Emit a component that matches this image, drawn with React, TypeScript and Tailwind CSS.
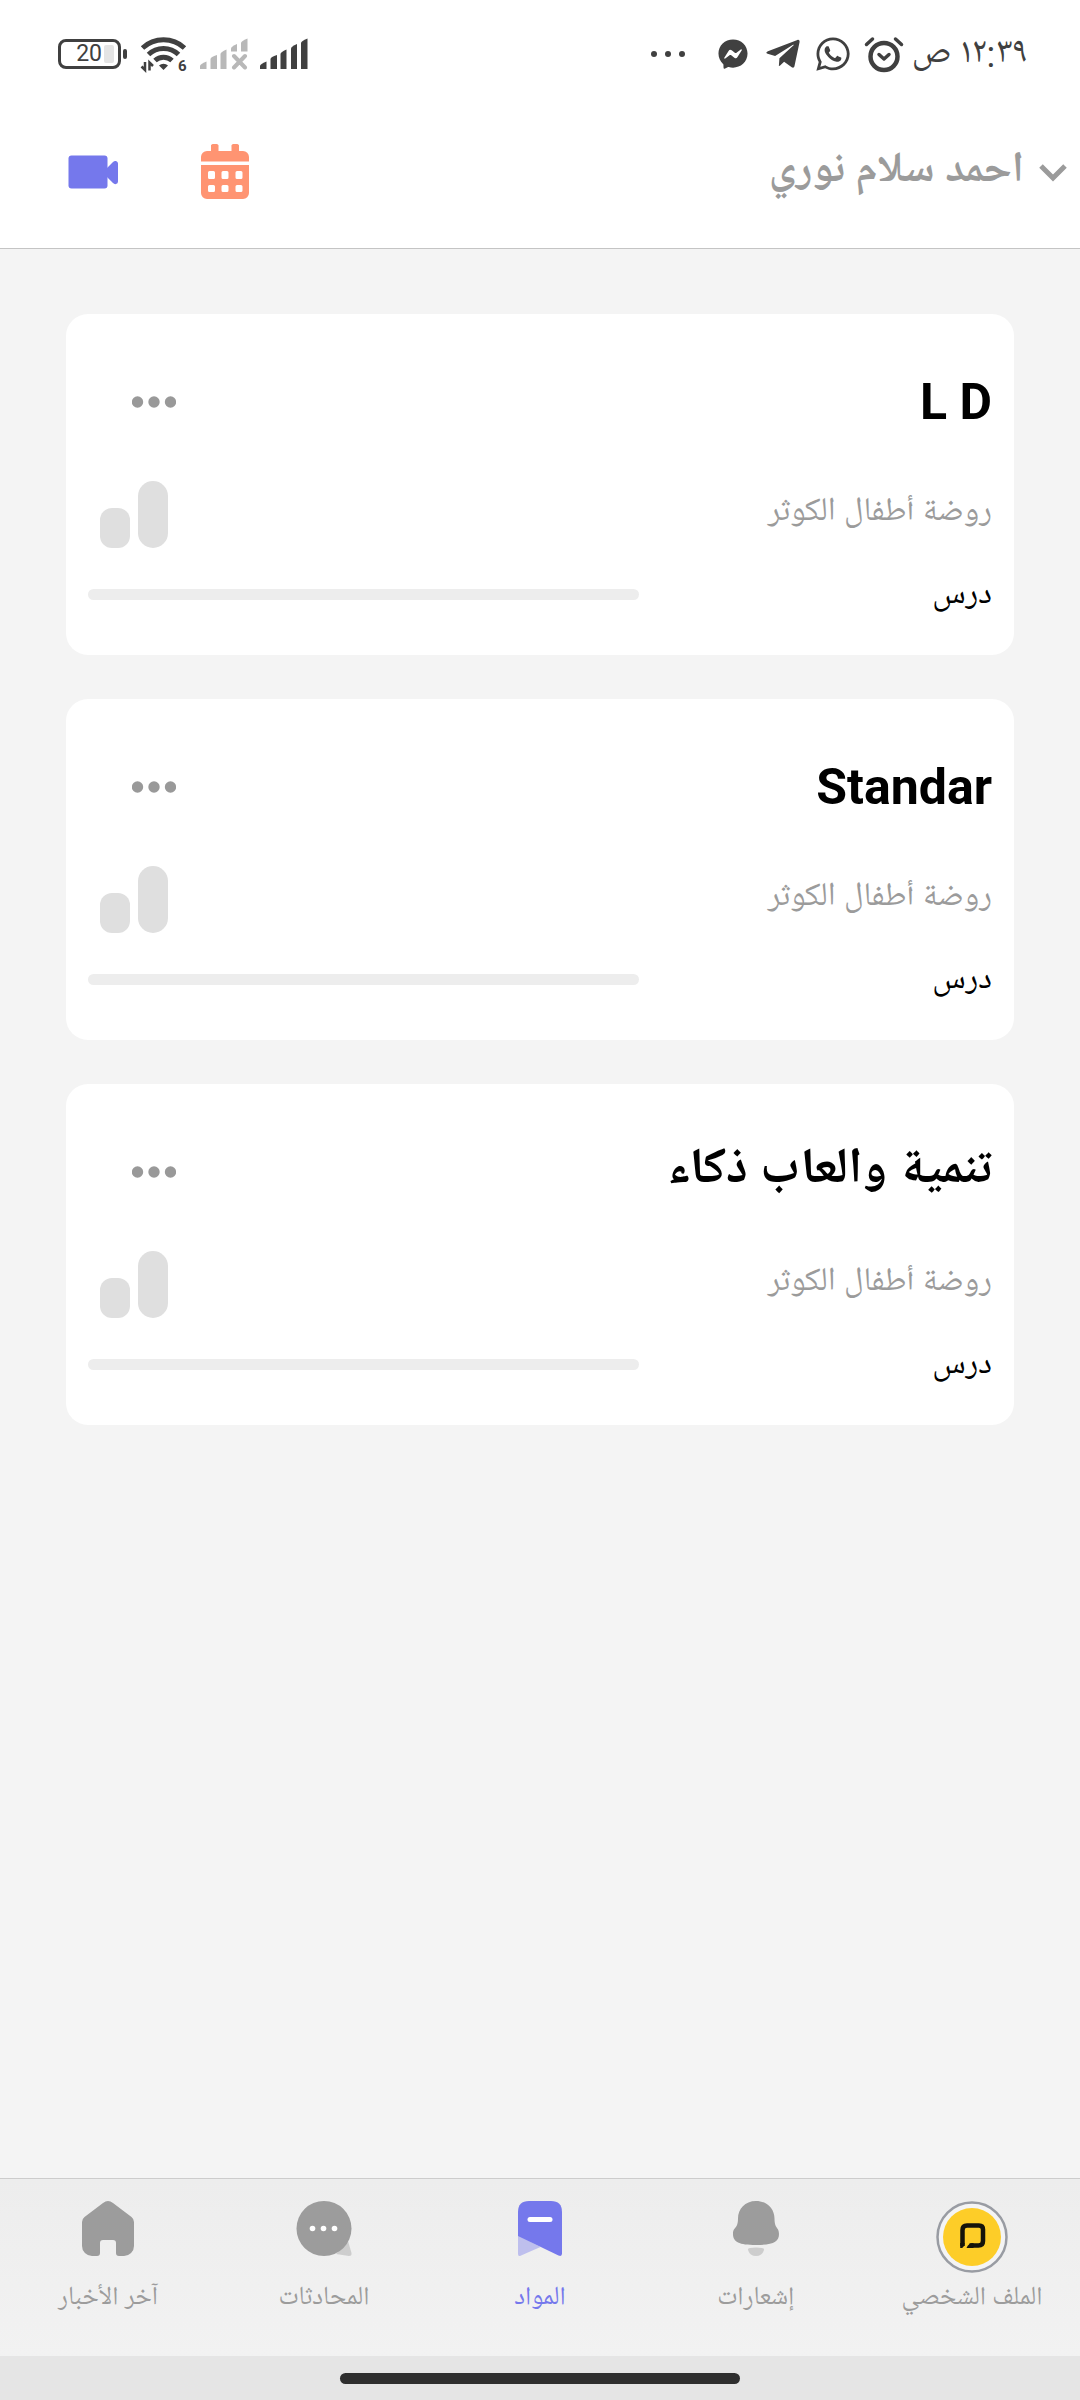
import React from 'react';
import { FaFacebookMessenger, FaTelegramPlane, FaWhatsapp } from 'react-icons/fa';

interface Subject {
  title: string;
  school: string;
  lesson: string;
}

const subjects: Subject[] = [
  { title: 'L D', school: 'روضة أطفال الكوثر', lesson: 'درس' },
  { title: 'Standar', school: 'روضة أطفال الكوثر', lesson: 'درس' },
  { title: 'تنمية والعاب ذكاء', school: 'روضة أطفال الكوثر', lesson: 'درس' },
];

function AlarmIcon() {
  return (
    <svg width="40" height="37" viewBox="0 0 40 37" fill="none" stroke="currentColor" strokeLinecap="round">
      <circle cx="20" cy="20.500" r="13.500" strokeWidth="4.500" />
      <path d="M15 18.500l5 4.500 5-4.500" strokeWidth="3.500" strokeLinejoin="round" />
      <path d="M2.500 8.500l6-5.500M37.500 8.500l-6-5.500" strokeWidth="3.500" />
    </svg>
  );
}

function Battery() {
  return (
    <div className="flex items-center gap-0.5">
      <div className="flex h-[30px] w-[63px] items-center justify-end rounded-[8px] border-3 border-[#404040] pr-1">
        <span className="text-[23px] leading-6">20</span>
        <span className="ml-0.5 h-[18px] w-2.5 rounded-xs bg-[#e4e4e4]" />
      </div>
      <div className="h-2.5 w-1 rounded-xs bg-[#404040]" />
    </div>
  );
}

function WifiIcon() {
  return (
    <svg width="50" height="44" viewBox="0 -4 50 44" fill="none" stroke="currentColor" strokeWidth="5">
      <path d="M2.500 12a31 31 0 0 1 42 0" />
      <path d="M8.500 18.500a21.500 21.500 0 0 1 30 0" />
      <path d="M15 24.500a12.500 12.500 0 0 1 17 0" />
      <path d="M23.500 34l-4.500-4.500a6.500 6.500 0 0 1 9 0z" fill="currentColor" stroke="none" />
      <path d="M5 26v8l-3.500-3.500M9.500 34.500v-8l3.500 3.500" strokeWidth="2.500" />
      <text x="38" y="34.500" textAnchor="start" direction="ltr" fontSize="15" fontWeight="700" fill="currentColor" stroke="none">6</text>
    </svg>
  );
}

function SignalIcon() {
  return (
    <svg width="48" height="32" viewBox="0 0 48 32" fill="currentColor">
      <path d="M0 31v-3q0-2 6.500-4.500v7.500z" />
      <path d="M10.500 31V21q0-2 6.500-4v14z" />
      <path d="M20.500 31V16q0-2 6-4.500v19.500z" />
      <path d="M31 31V10.500q0-2 6-4.500v25z" />
      <path d="M41 31V5q0-2 6.500-4.500v30.500z" />
    </svg>
  );
}

function NoSignalIcon() {
  return (
    <svg width="48" height="32" viewBox="0 0 48 32" fill="currentColor">
      <path d="M0 31v-3q0-2 6.500-4.500v7.500z" />
      <path d="M10.500 31V21q0-2 6.500-4v14z" />
      <path d="M20.500 31V16q0-2 6-4.500v19.500z" />
      <path d="M31 13.500V10.500q0-2 6-4.500v7.500z" />
      <path d="M41 13.500V5q0-2 6.500-4.500v13z" />
      <path d="M34 18l11 11.500M45 18L34 29.500" stroke="currentColor" strokeWidth="4" strokeLinecap="round" />
    </svg>
  );
}

function StatusBar() {
  return (
    <div className="flex h-24 items-center justify-between pt-3 pr-[52px] pl-[58px] text-[#404040]">
      <div className="flex items-center">
        <span className="pt-0.5 text-[36px] leading-10">١٢:٣٩ ص</span>
        <span className="mr-2"><AlarmIcon /></span>
        <FaWhatsapp className="mr-3 size-[38px]" />
        <FaTelegramPlane className="mr-3 size-[38px]" />
        <FaFacebookMessenger className="mr-4 size-[30px]" />
        <svg width="36" height="8" viewBox="0 0 36 8" fill="currentColor" className="mr-8">
          <circle cx="4" cy="4" r="3" />
          <circle cx="18" cy="4" r="3" />
          <circle cx="32" cy="4" r="3" />
        </svg>
      </div>
      <div dir="ltr" className="flex items-center">
        <Battery />
        <span className="ml-[13px]"><WifiIcon /></span>
        <span className="ml-2.5 text-[#b8b8b8]"><NoSignalIcon /></span>
        <span className="ml-3"><SignalIcon /></span>
      </div>
    </div>
  );
}

function Header() {
  return (
    <header className="flex h-[153px] items-center justify-between border-b border-[#c4c4c4] pr-3 pl-[68px]">
      <button type="button" className="flex items-center gap-3.5 text-[#9b9b9b]">
        <svg width="30" height="20" viewBox="0 0 30 20" fill="none" stroke="currentColor" strokeWidth="5">
          <path d="M3 4l12 12 12-12" />
        </svg>
        <span className="text-[43px] leading-[60px] font-bold">احمد سلام نوري</span>
      </button>
      <div className="flex items-center gap-[82px]">
        <button type="button" aria-label="التقويم">
          <svg width="50" height="56" viewBox="0 0 50 56" fill="#ff9472">
            <path d="M1 17.500V13a6 6 0 0 1 6-6h4V2.500a2 2 0 0 1 2-2.500h3.500a2 2 0 0 1 2 2.500V7h13V2.500a2 2 0 0 1 2-2.500H37a2 2 0 0 1 2 2.500V7h4a6 6 0 0 1 6 6v4.500z" />
            <path
              fillRule="evenodd"
              d="M1 21h48v28a6 6 0 0 1-6 6H7a6 6 0 0 1-6-6zM9.500 27a1.500 1.500 0 0 0-1.500 1.500v5a1.500 1.500 0 0 0 1.500 1.500h4a1.500 1.500 0 0 0 1.500-1.500v-5a1.500 1.500 0 0 0-1.500-1.500zM23 27a1.500 1.500 0 0 0-1.500 1.500v5a1.500 1.500 0 0 0 1.500 1.500h4a1.500 1.500 0 0 0 1.500-1.500v-5a1.500 1.500 0 0 0-1.500-1.500zM37 27a1.500 1.500 0 0 0-1.500 1.500v5a1.500 1.500 0 0 0 1.500 1.500h4a1.500 1.500 0 0 0 1.500-1.500v-5a1.500 1.500 0 0 0-1.500-1.500zM9.500 41a1.500 1.500 0 0 0-1.500 1.500v4a1.500 1.500 0 0 0 1.500 1.500h4a1.500 1.500 0 0 0 1.500-1.500v-4a1.500 1.500 0 0 0-1.500-1.500zM23 41a1.500 1.500 0 0 0-1.500 1.500v4a1.500 1.500 0 0 0 1.500 1.500h4a1.500 1.500 0 0 0 1.500-1.500v-4a1.500 1.500 0 0 0-1.500-1.500zM37 41a1.500 1.500 0 0 0-1.500 1.500v4a1.500 1.500 0 0 0 1.500 1.500h4a1.500 1.500 0 0 0 1.500-1.500v-4a1.500 1.500 0 0 0-1.500-1.500z"
            />
          </svg>
        </button>
        <button type="button" aria-label="مكالمة فيديو">
          <svg width="50" height="34" viewBox="0 0 50 34" fill="#7578ec">
            <rect x="0.500" y="0.500" width="39" height="33" rx="3" />
            <path d="M39 13l6-6q1.500-1.500 3-1 2 .5 2 2.500v18q0 2-2 2.500-1.500.5-3-1l-6-6z" />
          </svg>
        </button>
      </div>
    </header>
  );
}

function SubjectCard({ title, school, lesson }: Subject) {
  return (
    <article className="rounded-[22px] bg-white px-[22px] pt-12 pb-[41px]">
      <div className="flex h-20 items-center justify-between">
        <h2 className="text-[50px] leading-[60px] font-bold text-black">{title}</h2>
        <button type="button" aria-label="المزيد" className="ml-11">
          <svg width="44" height="12" viewBox="0 0 44 12" fill="#999999">
            <circle cx="5.500" cy="6" r="5.700" />
            <circle cx="22" cy="6" r="5.700" />
            <circle cx="38.500" cy="6" r="5.700" />
          </svg>
        </button>
      </div>
      <div className="mt-[39px] flex h-[67px] items-center justify-between">
        <p className="pb-1 text-[33px] leading-10 text-[#9b9b9b]">{school}</p>
        <div dir="ltr" className="ml-3 flex w-[68px] items-end justify-between">
          <span className="h-10 w-[30px] rounded-[12px] bg-[#dfdfdf]" />
          <span className="h-[67px] w-[30px] rounded-full bg-[#dfdfdf]" />
        </div>
      </div>
      <div className="mt-[26px] flex h-10 items-center justify-between">
        <p className="pt-1 text-[33px] leading-10 text-black">{lesson}</p>
        <div className="h-[11px] w-[61%] rounded-full bg-[#ededed]" />
      </div>
    </article>
  );
}

function HomeIcon() {
  return (
    <svg width="52" height="55" viewBox="0 0 52 55" fill="currentColor">
      <path d="M0 21q0-3 2.500-5L21 2q5-4 10 0l18.500 14q2.500 2 2.500 5v24a10 10 0 0 1-10 10h-5q-3 0-3-3V42q0-3-3-3H21q-3 0-3 3v10q0 3-3 3h-5A10 10 0 0 1 0 45z" />
    </svg>
  );
}

function ChatIcon() {
  return (
    <svg width="56" height="55" viewBox="0 0 56 55" fill="currentColor">
      <path d="M52 40l3.500 12q.5 3-2.500 3l-13-2z" opacity="0.400" />
      <circle cx="28" cy="27.500" r="27.500" />
      <g fill="#ffffff">
        <circle cx="16.500" cy="27.500" r="2.800" />
        <circle cx="27.500" cy="27.500" r="2.800" />
        <circle cx="38.500" cy="27.500" r="2.800" />
      </g>
    </svg>
  );
}

function BookmarkIcon() {
  return (
    <svg width="44" height="55" viewBox="0 0 44 55" fill="currentColor">
      <path d="M0 34v19q0 3 3 1.500L22.500 46z" opacity="0.400" />
      <path d="M0 11Q0 0 11 0h22q11 0 11 11v41.500q0 3.500-3.500 2L0 35z" />
      <rect x="9.500" y="16" width="25" height="5" rx="2.500" fill="#ffffff" />
    </svg>
  );
}

function BellIcon() {
  return (
    <svg width="46" height="55" viewBox="0 0 46 55" fill="currentColor">
      <path d="M23 0C34 0 41.500 8 41.500 17.500c0 11 4.500 8 4.500 15.500 0 8-6 11-23 11S0 41 0 33c0-7.500 5-4.500 5-15.500C5 8 12 0 23 0z" />
      <path d="M15 49q-.5-1.500 2-2 6-1 12 0 2.500.5 2 2-2 6-8 6t-8-6z" opacity="0.400" />
    </svg>
  );
}

function ProfileIcon() {
  return (
    <svg width="72" height="72" viewBox="0 0 72 72" fill="none">
      <circle cx="36" cy="36" r="34.500" fill="#f4f4f4" stroke="#999ca3" strokeWidth="2.500" />
      <circle cx="36" cy="36" r="29" fill="#fdcd28" />
      <path d="M26.500 45V29q0-4.500 4.500-4.500h12q4 0 4 4v11.500q0 4.500-4.500 4.500h-9" stroke="#15130a" strokeWidth="4.500" />
      <path d="M24.200 47v-5h4.500q0 3-2.500 5zM30.500 47q2-5 7-5v5z" fill="#15130a" />
    </svg>
  );
}

interface NavItem {
  label: string;
  icon: React.ReactNode;
  active?: boolean;
}

const navItems: NavItem[] = [
  { label: 'الملف الشخصي', icon: <ProfileIcon /> },
  { label: 'إشعارات', icon: <BellIcon /> },
  { label: 'المواد', icon: <BookmarkIcon />, active: true },
  { label: 'المحادثات', icon: <ChatIcon /> },
  { label: 'آخر الأخبار', icon: <HomeIcon /> },
];

function BottomNav() {
  return (
    <nav className="grid h-[178px] grid-cols-5 border-t border-[#cccccc] bg-linear-to-b from-[#ededed] to-[#f2f2f2]">
      {navItems.map((item) => (
        <a
          key={item.label}
          href="#"
          className={`flex flex-col items-center pt-[22px] ${item.active ? 'text-[#7578ec]' : 'text-[#9c9c9c]'}`}
        >
          <span className="h-20">{item.icon}</span>
          <span className="text-[26px] leading-9 whitespace-nowrap">{item.label}</span>
        </a>
      ))}
    </nav>
  );
}

export default function App() {
  return (
    <div
      dir="rtl"
      lang="ar"
      className="flex min-h-screen flex-col bg-white font-[Roboto,'Noto_Naskh_Arabic_UI','Noto_Naskh_Arabic','Noto_Sans_Arabic','Noto_Sans','DejaVu_Sans',sans-serif]"
    >
      <StatusBar />
      <Header />
      <main className="flex flex-1 flex-col gap-11 bg-[#f4f4f4] px-[66px] pt-[65px] pb-11">
        {subjects.map((subject) => (
          <SubjectCard key={subject.title} {...subject} />
        ))}
      </main>
      <BottomNav />
      <div className="flex h-11 items-center justify-center bg-[#e5e5e5]">
        <div className="h-[11px] w-[37%] rounded-full bg-[#2e2e2e]" />
      </div>
    </div>
  );
}
